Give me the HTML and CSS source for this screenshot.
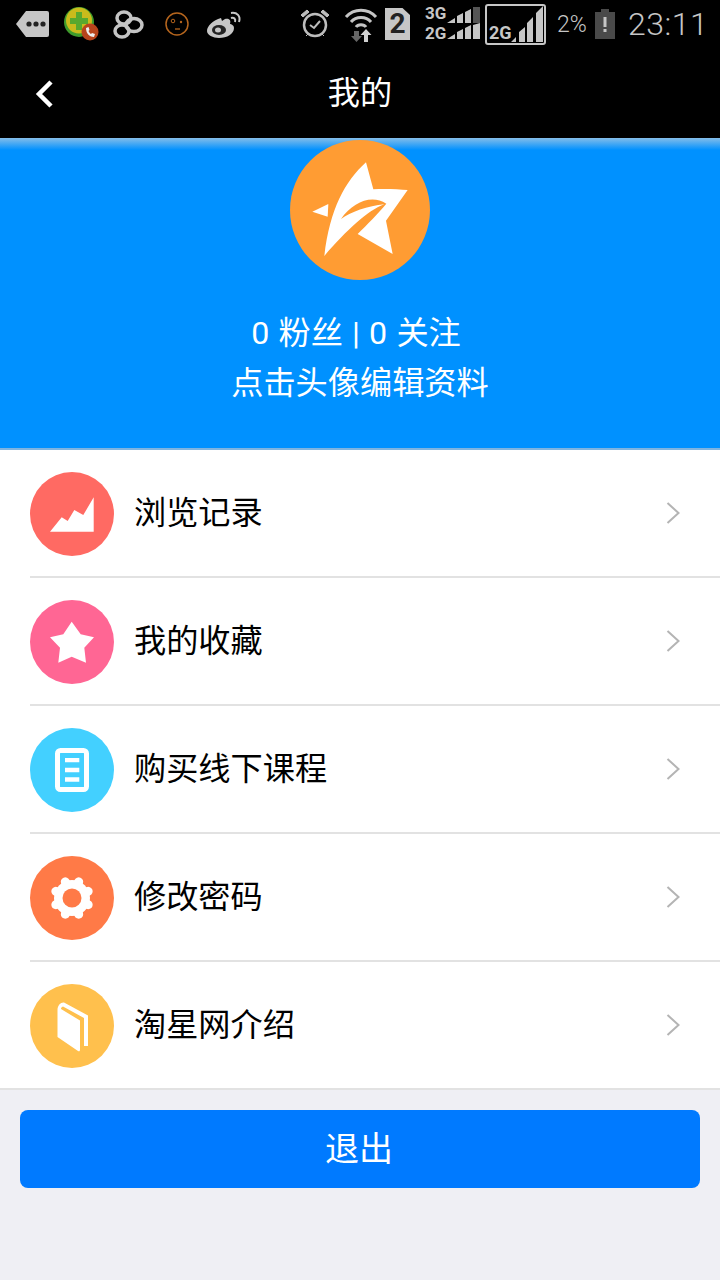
FILE: index.html
```html
<!DOCTYPE html>
<html lang="zh-CN">
  <head>
    <meta charset="UTF-8" />
    <meta name="viewport" content="width=device-width, initial-scale=1.0" />
    <title>我的</title>
    <link rel="stylesheet" href="styles.css">
  </head>
  <body>
    <div class="statusbar">
      <svg class="st st-msg" viewBox="0 0 33 26"><path d="M10 0H31a2 2 0 0 1 2 2V24a2 2 0 0 1-2 2H10L0 13Z" fill="#c6c6c6"/><circle cx="13" cy="13" r="2.6" fill="#222"/><circle cx="20" cy="13" r="2.6" fill="#222"/><circle cx="27" cy="13" r="2.6" fill="#222"/></svg>
      <svg class="st st-guard" viewBox="0 0 36 36"><circle cx="15" cy="16" r="15" fill="#3f9b2c"/><circle cx="15" cy="14.500" r="13" fill="#c9bb1c"/><path d="M12 6h6v6h6v6h-6v6h-6v-6H6v-6h6Z" fill="#58a82e"/><circle cx="26" cy="26" r="8.500" fill="#b8441c"/><path d="M22 22c0 6 4 9 8 9l1-3-3-1-1 1c-1-.5-2-2-2.500-3l1-1-1-3Z" fill="#eee"/></svg>
      <svg class="st st-knot" viewBox="0 0 31 29"><g fill="none" stroke="#c4c4c4" stroke-width="3.500"><ellipse cx="11" cy="8" rx="7" ry="6"/><ellipse cx="9" cy="21" rx="7" ry="6"/><ellipse cx="21" cy="15" rx="8" ry="6.500"/></g></svg>
      <svg class="st st-face" viewBox="0 0 24 24"><circle cx="12" cy="12" r="11" fill="none" stroke="#b5651d" stroke-width="1.500"/><circle cx="8" cy="9" r="1.800" fill="none" stroke="#b5651d"/><circle cx="16" cy="10" r="1.200" fill="#b5651d"/><path d="M10 17h5" stroke="#b5651d" stroke-width="1.300"/></svg>
      <svg class="st st-weibo" viewBox="0 0 35 28"><path d="M14 8C6 10 0 16 0 21c0 4 6 7 12 7 8 0 15-4 15-10 0-3-3-4-4-4 1-3 0-6-5-5l-3 2Z" fill="#c6c6c6"/><ellipse cx="12" cy="20" rx="7" ry="5" fill="#222"/><ellipse cx="11" cy="20" rx="3" ry="2.500" fill="#c6c6c6"/><path d="M24 8c3-1 5 1 4 4M24 3c6-1 10 3 8 9" fill="none" stroke="#c6c6c6" stroke-width="2"/></svg>
      <svg class="st st-alarm" viewBox="0 0 30 30"><circle cx="15" cy="16" r="11" fill="none" stroke="#bdbdbd" stroke-width="2.500"/><path d="M10 16l4 3 6-7" fill="none" stroke="#bdbdbd" stroke-width="2"/><path d="M1 6l6-5 2 2-6 5ZM29 6l-6-5-2 2 6 5ZM6 27l3-3M24 27l-3-3" fill="#bdbdbd" stroke="#bdbdbd"/></svg>
      <svg class="st st-wifi" viewBox="0 0 34 35"><g fill="none" stroke="#c4c4c4" stroke-width="3"><path d="M2 10C10 1 24 1 32 10"/><path d="M7 15C12 9 22 9 27 15"/><path d="M12 20C14 17 20 17 22 20"/></g><path d="M10 24h5v5h3l-5.500 6-5.500-6h3Z" fill="#666"/><path d="M22 22l5.500 6H24v7h-4v-7h-3.500Z" fill="#d0d0d0"/></svg>
      <div class="sim">2</div>
      <div class="st-dual">
        <div class="dual-row"><span>3G</span><svg viewBox="0 0 33 16"><path d="M0 16l8-5v5ZM10 16V9l6-3v10ZM18 16V5l6-3v14Z" fill="#c6c6c6"/><path d="M26 16V0h7v16Z" fill="#555"/></svg></div>
        <div class="dual-row"><span>2G</span><svg viewBox="0 0 33 16"><path d="M0 16l8-5v5ZM10 16V9l6-3v10ZM18 16V5l6-3v14ZM26 16V2l7-2v16Z" fill="#c6c6c6"/></svg></div>
      </div>
      <div class="st-box"><span>2G</span><svg viewBox="0 0 32 36"><path d="M0 36l5-5v5ZM8 36V26l6-5v15ZM16 36V17l6-6v25ZM25 36V7l7-7v36Z" fill="#c6c6c6"/></svg></div>
      <span class="st-pct">2%</span>
      <svg class="st st-batt" viewBox="0 0 20 30"><path d="M6 0h8v3h6v27H0V3h6Z" fill="#4a4a4a"/><rect x="8.500" y="8" width="3" height="10" fill="#c6c6c6"/><rect x="8.500" y="20" width="3" height="3" fill="#c6c6c6"/></svg>
      <span class="st-time">23:11</span>
    </div>

    <div class="navbar">
      <svg class="back" viewBox="0 0 20 30"><path d="M17 3L5 15l12 12" fill="none" stroke="#fff" stroke-width="4.500"/></svg>
      <h1>我的</h1>
    </div>

    <div class="profile">
      <svg class="avatar" viewBox="0 0 140 140">
        <circle cx="70" cy="70" r="70" fill="#ff9c33"/>
        <g transform="translate(15 15) scale(.3333)" fill="#fff">
          <path d="M183 22L205 103C240 100 280 103 308 105L243 197L263 297L158 237C185 210 220 175 244 146C200 118 145 140 108 192C135 172 190 152 238 148C190 165 125 225 58 303C75 160 120 80 183 22Z"/>
          <path d="M70 147L22 170L68 185Z"/>
        </g>
      </svg>
      <p class="stats">0 粉丝 | 0 关注</p>
      <p class="hint">点击头像编辑资料</p>
    </div>

    <ul class="menu">
      <li class="menu-item">
        <svg class="ico" viewBox="0 0 84 84"><circle cx="42" cy="42" r="42" fill="#ff6a63"/><path d="M20 59.700L31.700 45.300L37.700 49L44.300 38L53.300 43L63.700 25.300V59.700Z" fill="#fff"/></svg>
        <span class="label">浏览记录</span>
        <svg class="chev" viewBox="0 0 14 22"><path d="M1.500 1L12.500 11L1.500 21" fill="none" stroke="#b4b4b4" stroke-width="2"/></svg>
      </li>
      <li class="menu-item">
        <svg class="ico" viewBox="0 0 84 84"><circle cx="42" cy="42" r="42" fill="#ff6694"/><path d="M41.700 21.700L50.700 34.300L64 37.300L54.300 47.700L56 62.700L41.700 56.700L28.300 62.700L30 47.700L20 37.300L33.300 34.300Z" fill="#fff"/></svg>
        <span class="label">我的收藏</span>
        <svg class="chev" viewBox="0 0 14 22"><path d="M1.500 1L12.500 11L1.500 21" fill="none" stroke="#b4b4b4" stroke-width="2"/></svg>
      </li>
      <li class="menu-item">
        <svg class="ico" viewBox="0 0 84 84"><circle cx="42" cy="42" r="42" fill="#43d0ff"/><rect x="27.500" y="22.500" width="29" height="39" rx="3" fill="none" stroke="#fff" stroke-width="5"/><path d="M35 30h14.300v4.300H35ZM35 39.700h14.300v4.600H35ZM35 49.300h14.300v4.400H35Z" fill="#fff"/></svg>
        <span class="label">购买线下课程</span>
        <svg class="chev" viewBox="0 0 14 22"><path d="M1.500 1L12.500 11L1.500 21" fill="none" stroke="#b4b4b4" stroke-width="2"/></svg>
      </li>
      <li class="menu-item">
        <svg class="ico" viewBox="0 0 84 84"><circle cx="42" cy="42" r="42" fill="#ff7a47"/><circle cx="42" cy="42" r="18" fill="#fff"/><g stroke="#fff" stroke-width="9" stroke-linecap="round"><path d="M42 24.500V59.500" transform="rotate(22.500 42 42)"/><path d="M42 24.500V59.500" transform="rotate(67.500 42 42)"/><path d="M42 24.500V59.500" transform="rotate(112.500 42 42)"/><path d="M42 24.500V59.500" transform="rotate(157.500 42 42)"/></g><circle cx="42" cy="42" r="9.500" fill="#ff7a47"/></svg>
        <span class="label">修改密码</span>
        <svg class="chev" viewBox="0 0 14 22"><path d="M1.500 1L12.500 11L1.500 21" fill="none" stroke="#b4b4b4" stroke-width="2"/></svg>
      </li>
      <li class="menu-item">
        <svg class="ico" viewBox="0 0 84 84"><circle cx="42" cy="42" r="42" fill="#ffc04d"/><path d="M27.500 26C27.500 21 31 18 34 18.500L58 31.500V62H54V34L33 22.500C31.500 23 31 24 31 25L50 36.500V65.500C50 67.500 49 67.500 48 67L27.500 53Z" fill="#fff"/></svg>
        <span class="label">淘星网介绍</span>
        <svg class="chev" viewBox="0 0 14 22"><path d="M1.500 1L12.500 11L1.500 21" fill="none" stroke="#b4b4b4" stroke-width="2"/></svg>
      </li>
    </ul>

    <div class="logout-wrap">
      <button class="logout">退出</button>
    </div>
  </body>
</html>
```

FILE: styles.css
```css
* {
  box-sizing: border-box;
}

html,
body {
  margin: 0;
  padding: 0;
}

body {
  width: 720px;
  height: 1280px;
  overflow: hidden;
  background-color: #efeff4;
  font-family: Roboto, "Noto Sans CJK SC", sans-serif;
}

/* status bar */
.statusbar {
  display: flex;
  align-items: center;
  height: 48px;
  padding-left: 16px;
  background-color: #000;
  color: #c6c6c6;
}

.st {
  display: block;
  flex: none;
}

.st-msg {
  width: 33px;
  height: 26px;
}

.st-guard {
  width: 36px;
  height: 36px;
  margin-left: 15px;
}

.st-knot {
  width: 31px;
  height: 29px;
  margin-left: 13px;
}

.st-face {
  width: 24px;
  height: 24px;
  margin-left: 21px;
}

.st-weibo {
  width: 35px;
  height: 28px;
  margin-left: 18px;
}

.st-alarm {
  width: 30px;
  height: 30px;
  margin-left: 58px;
}

.st-wifi {
  width: 34px;
  height: 35px;
  margin-left: 14px;
}

.sim {
  flex: none;
  width: 25px;
  height: 32px;
  margin-left: 7px;
  background-color: #c6c6c6;
  clip-path: polygon(0 0, 70% 0, 100% 22%, 100% 100%, 0 100%);
  color: #222;
  font-size: 28px;
  font-weight: 700;
  line-height: 32px;
  text-align: center;
}

.st-dual {
  flex: none;
  width: 55px;
  margin-top: -2px;
  margin-left: 15px;
}

.dual-row {
  display: flex;
  align-items: flex-start;
  justify-content: space-between;
  height: 16px;
  font-size: 17px;
  font-weight: 700;
  line-height: 12px;
}

.dual-row + .dual-row {
  align-items: flex-end;
}

.dual-row svg {
  width: 33px;
  height: 16px;
}

.st-box {
  display: flex;
  align-items: flex-end;
  flex: none;
  width: 61px;
  height: 41px;
  margin-left: 5px;
  padding: 0 0 1px 2px;
  border: 2px solid #c6c6c6;
  border-radius: 3px;
  font-size: 18px;
  font-weight: 700;
  line-height: 18px;
}

.st-box svg {
  width: 32px;
  height: 36px;
  margin-left: -1px;
}

.st-pct {
  flex: none;
  width: 32px;
  margin-left: 11px;
  font-size: 23px;
  font-weight: 300;
}

.st-batt {
  width: 20px;
  height: 30px;
  margin-left: 6px;
}

.st-time {
  flex: none;
  margin-left: 13px;
  font-size: 32px;
  font-weight: 300;
  letter-spacing: 0.5px;
}

/* nav bar */
.navbar {
  position: relative;
  height: 90px;
  background-color: #000;
}

.navbar h1 {
  margin: 0;
  color: #fff;
  font-size: 32.2px;
  font-weight: 400;
  line-height: 90px;
  text-align: center;
}

.back {
  position: absolute;
  left: 34px;
  top: 31px;
  width: 20px;
  height: 30px;
}

/* blue profile block */
.profile {
  height: 312px;
  padding-top: 2px;
  border-bottom: 2px solid #7fb4e0;
  background: linear-gradient(#84bde9, #0091ff 12px);
  color: #fff;
  text-align: center;
}

.avatar {
  display: block;
  width: 140px;
  height: 140px;
  margin: 0 auto;
}

.profile p {
  margin: 0;
  font-size: 32.2px;
  line-height: 50px;
}

.stats {
  padding-top: 28px;
  padding-right: 8px;
  word-spacing: 1.2px;
}

/* menu list */
.menu {
  margin: 0;
  padding: 0;
  list-style: none;
  background-color: #fff;
  border-bottom: 2px solid #e2e2e2;
}

.menu-item {
  display: flex;
  align-items: center;
  height: 128px;
  margin-left: 30px;
  padding-top: 2px;
  padding-right: 40px;
  border-bottom: 2px solid #e2e2e2;
}

.menu-item:last-child {
  height: 126px;
  border-bottom: 0;
}

.ico {
  flex: none;
  width: 84px;
  height: 84px;
}

.label {
  flex: 1;
  margin-left: 20px;
  margin-bottom: 8px;
  color: #000;
  font-size: 32.2px;
}

.chev {
  flex: none;
  width: 14px;
  height: 22px;
  margin-bottom: 2px;
}

/* logout */
.logout-wrap {
  padding: 20px 20px 0;
}

.logout {
  display: block;
  width: 100%;
  height: 78px;
  padding: 0 2px 5px 0;
  border: 0;
  border-radius: 8px;
  background-color: #007aff;
  color: #fff;
  font-family: inherit;
  font-size: 34px;
}
```
